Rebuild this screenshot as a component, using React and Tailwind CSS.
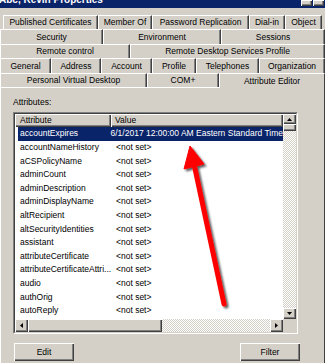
import React from 'react';

const raised = 'shadow-[inset_1px_1px_#ffffff,inset_-1px_-1px_#404040,inset_-2px_-2px_#808080]';

const tabRows = [
  {
    row: 'h-[14px] ml-[3px] mr-[3px]',
    tabs: [
      ['Published Certificates', 'w-[95px]'],
      ['Member Of', 'w-[54px]'],
      ['Password Replication', 'w-[97px]'],
      ['Dial-in', 'w-[36px]'],
      ['Object', 'flex-1'],
    ],
  },
  {
    row: 'h-[15px]',
    tabs: [
      ['Security', 'w-[103px]'],
      ['Environment', 'w-[118px]'],
      ['Sessions', 'flex-1'],
    ],
  },
  {
    row: 'h-[14px]',
    tabs: [
      ['Remote control', 'w-[130px]'],
      ['Remote Desktop Services Profile', 'flex-1'],
    ],
  },
  {
    row: 'h-[15px]',
    tabs: [
      ['General', 'w-[51px]'],
      ['Address', 'w-[50px]'],
      ['Account', 'w-[51px]'],
      ['Profile', 'w-[44px]'],
      ['Telephones', 'w-[63px]'],
      ['Organization', 'flex-1'],
    ],
  },
];

const attributes = [
  ['accountExpires', '6/1/2017 12:00:00 AM Eastern Standard Time'],
  ['accountNameHistory', '<not set>'],
  ['aCSPolicyName', '<not set>'],
  ['adminCount', '<not set>'],
  ['adminDescription', '<not set>'],
  ['adminDisplayName', '<not set>'],
  ['altRecipient', '<not set>'],
  ['altSecurityIdentities', '<not set>'],
  ['assistant', '<not set>'],
  ['attributeCertificate', '<not set>'],
  ['attributeCertificateAttri...', '<not set>'],
  ['audio', '<not set>'],
  ['authOrig', '<not set>'],
  ['autoReply', '<not set>'],
  ['autoReplyMessage', '<not set>'],
];

const Tab = ({ label, width }) => (
  <div
    className={`${width} h-full flex items-center justify-center border-t border-l border-white border-r border-r-[#404040] shadow-[inset_-1px_0_#808080] whitespace-nowrap overflow-hidden`}
  >
    {label}
  </div>
);

const Arrow = ({ dir }) => (
  <svg width="5" height="5" viewBox="0 0 5 5">
    {dir === 'up' && <polygon points="2.5,1 0,4 5,4" fill="#000" />}
    {dir === 'down' && <polygon points="0,1 5,1 2.5,4" fill="#000" />}
    {dir === 'left' && <polygon points="1,2.5 4,0 4,5" fill="#000" />}
    {dir === 'right' && <polygon points="1,0 4,2.5 1,5" fill="#000" />}
  </svg>
);

const ScrollButton = ({ dir, className }) => (
  <div className={`${className} bg-[#d4d0c8] flex items-center justify-center ${raised}`}>
    <Arrow dir={dir} />
  </div>
);

const track = 'bg-[repeating-conic-gradient(#d4d0c8_0%_25%,#ffffff_0%_50%)] bg-[length:2px_2px]';

export default function App() {
  return (
    <div
      className="relative w-[325px] h-[363px] overflow-hidden bg-[#d4d0c8] text-black text-[8.5px]"
      style={{ fontFamily: '"Liberation Sans", Arial, sans-serif' }}
    >
      {/* Title bar */}
      <div className="h-[8px] bg-[#0a246a] flex justify-between overflow-hidden">
        <div className="-mt-[6px] -ml-[1px] text-white font-bold text-[10px] leading-[12px] whitespace-nowrap">
          Abc, Kevin Properties
        </div>
        <div className="flex gap-[1px] mr-[1px] h-[6px]">
          <div className={`w-[11px] h-full bg-[#d4d0c8] ${raised}`} />
          <div className={`w-[11px] h-full bg-[#d4d0c8] ${raised}`} />
        </div>
      </div>

      {/* Tabs */}
      <div className="mt-[7px]">
        {tabRows.map((r, i) => (
          <div key={i} className={`flex ${r.row}`}>
            {r.tabs.map(([label, width]) => (
              <Tab key={label} label={label} width={width} />
            ))}
          </div>
        ))}
        <div className="flex h-[14px]">
          <Tab label="Personal Virtual Desktop" width="w-[147px]" />
          <Tab label="COM+" width="w-[72px]" />
          <div className="relative z-10 flex-1 h-[15px] flex items-start justify-center pt-[1px] border-t border-l border-white border-r border-r-[#404040] bg-[#d4d0c8] whitespace-nowrap">
            Attribute Editor
          </div>
        </div>
      </div>

      {/* Panel */}
      <div className="border-t border-l border-white border-r border-r-[#404040] h-[300px] pl-[12px] pt-[8px]">
        <div className="h-[12px] leading-[12px]">Attributes:</div>

        <div className="mt-[4px] w-[285px] h-[222px] border border-t-[#808080] border-l-[#808080] border-b-white border-r-white">
          <div className="w-full h-full border border-t-[#404040] border-l-[#404040] border-b-[#d4d0c8] border-r-[#d4d0c8] bg-white grid grid-cols-[1fr_13px] grid-rows-[1fr_13px]">
            {/* list content */}
            <div className="overflow-hidden">
              <div className={`flex h-[13px] bg-[#d4d0c8]`}>
                <div className={`w-[96px] flex items-center pl-[5px] ${raised}`}>Attribute</div>
                <div className={`flex-1 flex items-center pl-[4px] ${raised}`}>Value</div>
              </div>
              {attributes.map(([name, value], i) => (
                <div
                  key={name}
                  className={`ml-[3px] flex h-[13.6px] items-center whitespace-nowrap ${
                    i === 0 ? 'bg-[#0a246a] text-white' : ''
                  }`}
                >
                  <div className="w-[96px] pl-[2px] overflow-hidden">{name}</div>
                  <div className="pl-[2px]">{value}</div>
                </div>
              ))}
            </div>

            {/* vertical scrollbar */}
            <div className="flex flex-col">
              <ScrollButton dir="up" className="h-[10px] shrink-0" />
              <div className={`h-[7px] shrink-0 bg-[#d4d0c8] ${raised}`} />
              <div className={`flex-1 ${track}`} />
              <ScrollButton dir="down" className="h-[11px] shrink-0" />
            </div>

            {/* horizontal scrollbar */}
            <div className="flex">
              <ScrollButton dir="left" className="w-[13px] shrink-0" />
              <div className={`w-[134px] shrink-0 bg-[#d4d0c8] ${raised}`} />
              <div className={`flex-1 ${track}`} />
              <ScrollButton dir="right" className="w-[13px] shrink-0" />
            </div>
            <div className="bg-[#d4d0c8]" />
          </div>
        </div>

        <div className="mt-[9px] w-[287px] flex justify-between">
          <button className={`ml-[1px] w-[60px] h-[18px] flex items-center justify-center bg-[#d4d0c8] ${raised}`}>
            Edit
          </button>
          <button className={`w-[60px] h-[18px] flex items-center justify-center bg-[#d4d0c8] ${raised}`}>
            Filter
          </button>
        </div>
      </div>

      {/* Red annotation arrow */}
      <svg className="absolute inset-0 pointer-events-none" width="325" height="363" viewBox="0 0 325 363">
        <defs>
          <filter id="shadow" x="-50%" y="-50%" width="200%" height="200%">
            <feDropShadow dx="2" dy="2" stdDeviation="1.3" floodColor="#000" floodOpacity="0.65" />
          </filter>
        </defs>
        <g filter="url(#shadow)">
          <line x1="194" y1="164" x2="224" y2="304" stroke="#ff0000" strokeWidth="5" strokeLinecap="round" />
          <polygon points="190,146 184,169 204,164" fill="#ff0000" stroke="#ff0000" strokeWidth="1" strokeLinejoin="round" />
        </g>
      </svg>
    </div>
  );
}
